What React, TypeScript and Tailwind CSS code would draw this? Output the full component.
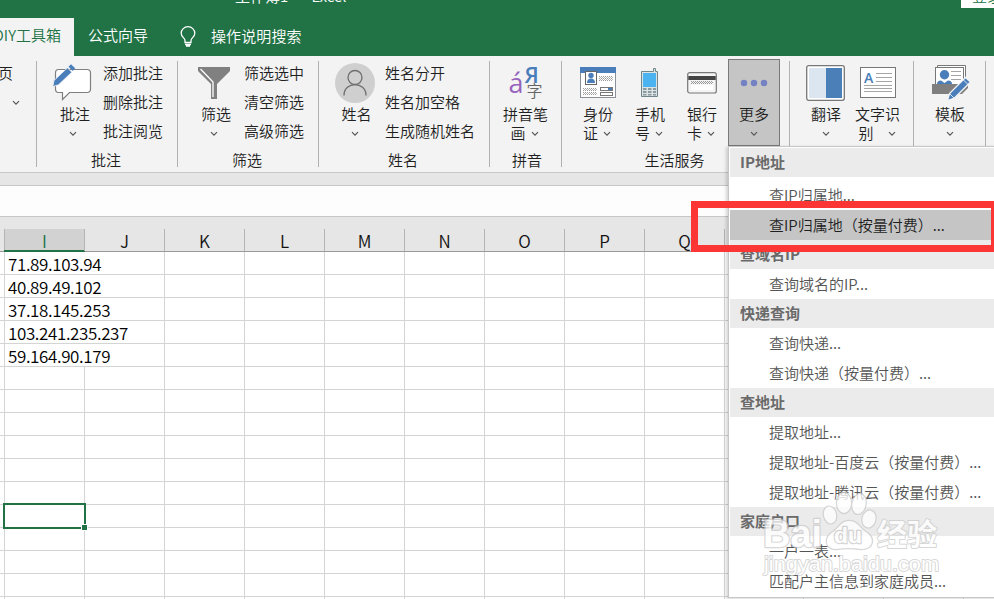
import type { ReactNode } from "react";

const COLUMNS = ["I", "J", "K", "L", "M", "N", "O", "P", "Q"];
const ROWS = 16;
const IPS = ["71.89.103.94", "40.89.49.102", "37.18.145.253", "103.241.235.237", "59.164.90.179"];

const MENU = [
    { title: "IP地址", items: ["查IP归属地...", "查IP归属地（按量付费）..."] },
    { title: "查域名IP", items: ["查询域名的IP..."] },
    { title: "快递查询", items: ["查询快递...", "查询快递（按量付费）..."] },
    { title: "查地址", items: ["提取地址...", "提取地址-百度云（按量付费）...", "提取地址-腾讯云（按量付费）..."] },
    { title: "家庭户口", items: ["一户一表...", "匹配户主信息到家庭成员..."] },
];

function Chevron({ className = "" }: { className?: string }) {
    return (
        <svg width="8" height="6" viewBox="0 0 8 6" className={`shrink-0 ${className}`}>
            <path d="M1 1.2 4 4.2 7 1.2" fill="none" stroke="#555" strokeWidth="1.2" />
        </svg>
    );
}

function CommentIcon() {
    return (
        <svg width="40" height="40" viewBox="0 0 40 40" className="-ml-[2px] -mt-px">
            <path d="M6.500 7.500H35Q38.500 7.500 38.500 11V27Q38.500 30.500 35 30.500H17.500L10.500 37.500V30.500H6.500Q3.500 30.500 3.500 27V11Q3.500 7.500 6.500 7.500Z" fill="#fff" stroke="#7f7f7f" strokeWidth="1.200" />
            <path d="M0.800 24.500 2 18.500 15.500 5.800 19.800 10.200 6.500 22.800Z" fill="#4a7ebb" stroke="#f3f3f3" strokeWidth="0.800" />
            <path d="M16.500 4.800 19 2.200 23.200 6.300 20.700 9Z" fill="#4a7ebb" />
        </svg>
    );
}

function FunnelIcon() {
    return (
        <svg width="34" height="36" viewBox="0 0 34 36">
            <path d="M1 2H33V6L20 19V34H14V19L1 6Z" fill="#808080" />
            <path d="M3.500 4 16 17V32" fill="none" stroke="#fff" strokeWidth="1.300" />
        </svg>
    );
}

function PersonIcon() {
    return (
        <svg width="40" height="40" viewBox="0 0 40 40">
            <circle cx="20" cy="20" r="20" fill="#cfcfcf" />
            <circle cx="20" cy="14.500" r="7" fill="none" stroke="#6e6e6e" strokeWidth="1.300" />
            <path d="M9 32.500C9 18 31 18 31 32.500" fill="none" stroke="#6e6e6e" strokeWidth="1.300" />
        </svg>
    );
}

function PinyinIcon() {
    return (
        <div className="relative h-10 w-10 leading-none">
            <span className="absolute top-[5px] left-[3px] font-['Open_Sans'] text-[27px] leading-[30px] font-normal text-[#9664bd]">á</span>
            <span className="absolute -top-px left-[19px] font-['Open_Sans'] text-[22px] leading-[24px] font-semibold text-[#4a7ebb]">Я</span>
            <span className="absolute top-[18px] left-[21px] text-[16px] leading-[18px] text-[#666]">字</span>
        </div>
    );
}

function IdCardIcon() {
    return (
        <svg width="36" height="31" viewBox="0 0 36 31">
            <rect x="0.500" y="0.500" width="35" height="30" fill="#fff" stroke="#8a9099" />
            <rect width="36" height="6" fill="#4a7ebb" />
            <rect x="5.500" y="4.500" width="11" height="13" fill="#fff" stroke="#666" />
            <circle cx="11" cy="8.500" r="2.700" fill="#4a7ebb" />
            <path d="M7 16Q7 11.500 11 11.500T15 16Z" fill="#4a7ebb" />
            <path d="M19 9.500H33M19 11.500H33M19 13.500H33M3 21.500H17M3 23.500H17M3 25.500H17M3 27.500H17" stroke="#9a9a9a" strokeDasharray="1 1" />
            <path d="M20 10.500H33M20 12.500H33M4 22.500H17M4 26.500H17" stroke="#b5b5b5" strokeDasharray="1 1" />
            <rect x="20.500" y="20.500" width="12" height="3" fill="#fff" stroke="#777" />
            <rect x="20.500" y="25.500" width="12" height="3" fill="#fff" stroke="#777" />
            <rect x="28" y="21" width="4" height="2" fill="#4a7ebb" />
        </svg>
    );
}

function PhoneIcon() {
    return (
        <svg width="18" height="29" viewBox="0 0 18 29">
            <path d="M0.500 3.500H12.500V0.500H14.500V3.500H16.500V28.500H0.500Z" fill="#dce3e5" stroke="#6f868b" />
            <rect x="2" y="5" width="13" height="14" fill="#4bb4f0" />
            <path d="M2 20H5.500V22H2ZM7 20H10.500V22H7ZM12 20H15V22H12ZM2 23H5.500V25H2ZM7 23H10.500V25H7ZM12 23H15V25H12ZM2 26H5.500V27.500H2ZM7 26H10.500V27.500H7ZM12 26H15V27.500H12Z" fill="#8a9a9e" />
        </svg>
    );
}

function BankCardIcon() {
    return (
        <svg width="30" height="22" viewBox="0 0 30 22">
            <rect x="0.700" y="0.700" width="28.600" height="20.300" rx="2" fill="#f4f4f4" stroke="#777" strokeWidth="1.200" />
            <rect x="1.300" y="4" width="27.400" height="4" fill="#444" />
            <path d="M4 9.500H26M4 11.500H26" stroke="#999" strokeDasharray="1 1" />
            <path d="M5 10.500H26" stroke="#999" strokeDasharray="1 1" />
            <rect x="4" y="13" width="22" height="5" fill="#fff" />
        </svg>
    );
}

function DotsIcon() {
    return (
        <svg width="28" height="8" viewBox="0 0 28 8" fill="#7482c4">
            <circle cx="4" cy="4" r="3.200" />
            <circle cx="14" cy="4" r="3.200" />
            <circle cx="24" cy="4" r="3.200" />
        </svg>
    );
}

function TranslateIcon() {
    return (
        <svg width="39" height="36" viewBox="0 0 39 36" className="-ml-[2px]">
            <rect x="0.700" y="0.700" width="37.600" height="34.600" rx="2" fill="#fff" stroke="#777" strokeWidth="1.300" />
            <rect x="3" y="3" width="17" height="30" fill="#dce6f1" />
            <rect x="20" y="3" width="16" height="30" fill="#4a7fb8" />
        </svg>
    );
}

function OcrIcon() {
    return (
        <svg width="36" height="31" viewBox="0 0 36 31">
            <rect x="0.500" y="0.500" width="35" height="30" fill="#fff" stroke="#777" />
            <path d="M16 6.500H32M16 10.500H32M16 14.500H32M4 18.500H32M4 21.500H32M4 24.500H32" stroke="#a6a6a6" />
            <text x="4" y="16" fontFamily="Open Sans, sans-serif" fontWeight="600" fontSize="14" fill="#4a7fb8">A</text>
        </svg>
    );
}

function TemplateIcon() {
    return (
        <svg width="38" height="36" viewBox="0 0 38 36" className="ml-px">
            <path d="M5.500 0.500H33.500V20H5.500Z" fill="#fff" stroke="#777" />
            <rect x="3.500" y="2.500" width="28" height="18" fill="#fff" stroke="#777" />
            <circle cx="12.500" cy="9.700" r="4.700" fill="#4a7ebb" />
            <path d="M5 19Q5 15.500 9 15.500L12.500 18 16 15.500Q20 15.500 20 19Z" fill="#4a7ebb" />
            <path d="M19 6.500H29M19 10.500H29M19 14.500H29" stroke="#a6a6a6" />
            <path d="M0 19H36V23L30 29H0Z" fill="#7f7f7f" />
            <path d="M15.500 35.500 17.500 28.500 33.500 12.500 38.500 17 22.500 33Z" fill="#4a7ebb" stroke="#f3f3f3" strokeWidth="1.300" />
            <path d="M31 14.500 36 19.500M17.500 28.500 22 33" stroke="#f3f3f3" strokeWidth="0.900" />
        </svg>
    );
}

type BigButtonProps = { icon: ReactNode; label: string; tail?: string; className?: string; labelClass?: string; gap?: string; active?: boolean };

function BigButton({ icon, label, tail, className = "w-[52px]", labelClass = "", gap = "gap-[5px]", active = false }: BigButtonProps) {
    return (
        <button className={`flex h-[87px] shrink-0 flex-col items-center ${active ? "bg-[#c5c5c5] outline outline-1 -outline-offset-1 outline-[#7a7a7a]" : ""} ${className}`}>
            <span className="flex h-[46px] items-center justify-center pt-px">{icon}</span>
            <span className={`h-[18px] leading-[18px] whitespace-nowrap ${labelClass}`}>{label}</span>
            <span className={`flex h-[19px] items-center leading-[19px] ${gap} ${tail ? "pr-[2px]" : ""}`}>
                {tail}
                <Chevron className="mt-[2px]" />
            </span>
        </button>
    );
}

function Group({ label, width, labelClass = "pr-[3px]", children }: { label?: string; width: string; labelClass?: string; children: ReactNode }) {
    return (
        <div className={`relative flex shrink-0 flex-col ${width}`}>
            <div className="flex h-[87px]">{children}</div>
            <div className={`mt-[5px] text-center leading-[18px] ${labelClass}`}>{label}</div>
            <div className="absolute top-[2px] right-0 h-[106px] w-px bg-[#b1b1b1]" />
        </div>
    );
}

function SmallButtons({ labels }: { labels: string[] }) {
    return (
        <div className="-mt-px ml-1 flex flex-col">
            {labels.map((label) => (
                <button key={label} className="h-[29px] text-left leading-[29px] whitespace-nowrap">{label}</button>
            ))}
        </div>
    );
}

function Ribbon() {
    return (
        <div className="flex h-[117px] shrink-0 border-b border-[#c8c8c8] bg-[#f3f3f3] pt-[3px] text-[15px] text-[#1f1f1f]">
            <Group width="w-[37px]">
                <div className="flex flex-col">
                    <span className="-mt-px -ml-[2px] h-[29px] leading-[29px]">页</span>
                    <Chevron className="mt-[13px] ml-[12px]" />
                </div>
            </Group>
            <Group label="批注" width="w-[141px]">
                <BigButton icon={<CommentIcon />} label="批注" className="ml-[10px] w-[52px]" labelClass="pl-1" />
                <SmallButtons labels={["添加批注", "删除批注", "批注阅览"]} />
            </Group>
            <Group label="筛选" width="w-[141px]">
                <BigButton icon={<FunnelIcon />} label="筛选" className="ml-[10px] w-[52px]" labelClass="pl-1" />
                <SmallButtons labels={["筛选选中", "清空筛选", "高级筛选"]} />
            </Group>
            <Group label="姓名" width="w-[171px]">
                <BigButton icon={<PersonIcon />} label="姓名" className="ml-[10px] w-[52px]" labelClass="pl-[3px]" />
                <SmallButtons labels={["姓名分开", "姓名加空格", "生成随机姓名"]} />
            </Group>
            <Group label="拼音" width="w-[72px]" labelClass="pl-[2px]">
                <BigButton icon={<PinyinIcon />} label="拼音笔" tail="画" className="w-[71px]" />
            </Group>
            <Group label="生活服务" width="w-[228px]">
                <BigButton icon={<IdCardIcon />} label="身份" tail="证" className="ml-[10px] w-[52px]" />
                <BigButton icon={<PhoneIcon />} label="手机" tail="号" />
                <BigButton icon={<BankCardIcon />} label="银行" tail="卡" />
                <BigButton icon={<DotsIcon />} label="更多" active />
            </Group>
            <Group width="w-[124px]">
                <BigButton icon={<TranslateIcon />} label="翻译" className="ml-[10px] w-[52px]" />
                <BigButton icon={<OcrIcon />} label="文字识" tail="别" gap="gap-[14px]" labelClass="pr-px" />
            </Group>
            <Group width="w-[72px]">
                <BigButton icon={<TemplateIcon />} label="模板" className="w-[72px]" />
            </Group>
        </div>
    );
}

function Header() {
    return (
        <div className="h-14 shrink-0 bg-[#217346] text-[15px] text-white">
            <div className="flex h-[18px] items-start justify-between overflow-hidden">
                <span className="-mt-[14px] ml-[235px] flex gap-[9px] leading-5 whitespace-nowrap">
                    <span>工作簿1</span>
                    <span>-</span>
                    <span>Excel</span>
                </span>
                <span className="h-2 w-[33px] overflow-hidden bg-white pl-[11px] whitespace-nowrap text-[#217346]">
                    <span className="-mt-[14px] block leading-5">登录</span>
                </span>
            </div>
            <div className="flex h-[38px] items-center">
                <div className="flex h-full w-[74px] items-center justify-end bg-[#f3f3f3] pr-[13px] pb-1 whitespace-nowrap text-[#217346]">DIY工具箱</div>
                <div className="ml-[14px] pb-1">公式向导</div>
                <svg width="16" height="22" viewBox="0 0 16 22" className="ml-8" fill="none" stroke="#fff" strokeWidth="1.300">
                    <path d="M5 16.500V14.500C5 12 1.200 11 1.200 7.200A6.800 6.500 0 0 1 14.800 7.200C14.800 11 11 12 11 14.500V16.500ZM5 18.500H11M6 20H10" />
                </svg>
                <div className="ml-[15px] pb-[2px] tracking-[0.1px]">操作说明搜索</div>
            </div>
        </div>
    );
}

function Sheet() {
    return (
        <div className="flex min-h-0 flex-1 flex-col">
            <div className="h-3 shrink-0 bg-[#e6e6e6]" />
            <div className="h-8 shrink-0 border-y border-[#c6c6c6] bg-[#fdfdfd]" />
            <div className="flex h-[35px] shrink-0 items-end border-b border-[#999] bg-[#e6e6e6] pl-1 text-[17px] text-[#111]">
                {COLUMNS.map((name, i) => (
                    <div
                        key={name}
                        className={`relative h-[22px] w-20 shrink-0 border-l border-[#b5b5b5] text-center leading-[24px] ${i === 0 ? "bg-[#d2d2d2] text-[#217346]" : ""}`}
                    >
                        {name}
                        {i === 0 && <div className="absolute -right-px -bottom-px -left-px h-[2px] bg-[#217346]" />}
                    </div>
                ))}
                <div className="h-[22px] border-l border-[#b5b5b5]" />
            </div>
            <div className="relative flex flex-1 flex-col overflow-hidden bg-white text-[17px] text-black">
                {Array.from({ length: ROWS }, (_, r) => (
                    <div key={r} className="flex h-[23px] shrink-0 border-b border-[#d4d4d4] pl-1">
                        {COLUMNS.map((name, c) => (
                            <div key={name} className={`w-20 shrink-0 border-l pl-[3px] leading-[23px] tracking-[-0.38px] whitespace-nowrap ${c === 1 && r < IPS.length ? "border-transparent" : "border-[#d4d4d4]"}`}>
                                {c === 0 ? IPS[r] : ""}
                            </div>
                        ))}
                        <div className="w-20 border-x border-[#d4d4d4]" />
                        <div className="w-20 border-r border-[#d4d4d4]" />
                        <div className="w-20 border-r border-[#d4d4d4]" />
                    </div>
                ))}
                {/* active cell with its fill handle */}
                <div className="absolute top-[251px] left-[3px] h-[26px] w-[83px] border-2 border-[#217346]">
                    <div className="absolute -right-[4px] -bottom-[4px] h-[7px] w-[7px] border border-white bg-[#217346]" />
                </div>
            </div>
        </div>
    );
}

function MoreMenu() {
    return (
        <div className="absolute top-[146px] left-[728px] h-[452px] w-[280px] border border-[#c6c6c6] bg-white pt-px pl-px text-[15px] text-[#555] shadow-[-2px_1px_3px_rgba(0,0,0,0.16)]">
            {MENU.map((section, s) => (
                <div key={section.title}>
                    <div className={`h-[29px] bg-[#ebebeb] pl-[10px] leading-[27px] font-bold text-[#6a6a6a] ${s === 0 ? "mb-[3px]" : ""}`}>{section.title}</div>
                    {section.items.map((item, i) => (
                        <div key={item} className={`h-[30px] pl-[39px] leading-[30px] whitespace-nowrap ${s === 0 && i === 1 ? "bg-[#c5c5c5] text-[#1f1f1f]" : ""}`}>
                            {item}
                        </div>
                    ))}
                </div>
            ))}
        </div>
    );
}

function Watermark() {
    return (
        <svg
            width="190"
            height="90"
            viewBox="0 0 190 90"
            className="absolute top-[490px] left-[755px] opacity-75"
            fill="#fff"
            stroke="#cacaca"
            strokeWidth="2.4"
            strokeLinejoin="round"
            paintOrder="stroke"
            fontFamily="Liberation Sans, Noto Sans CJK SC, sans-serif"
            fontWeight="700"
        >
            <text x="8" y="57" fontSize="38" textLength="59" lengthAdjust="spacingAndGlyphs">Bai</text>
            <ellipse cx="75" cy="25" rx="6" ry="8.500" transform="rotate(-12 75 25)" />
            <ellipse cx="89" cy="13" rx="7" ry="10" />
            <ellipse cx="104" cy="14" rx="6.500" ry="10" transform="rotate(10 104 14)" />
            <ellipse cx="114" cy="29" rx="6.500" ry="8.500" transform="rotate(12 114 29)" />
            <path d="M94 31C86 31 84 38 78 42C69 47 70 59 81 59Q94 57 106 59C119 59 120 48 111 42C104 38 103 31 94 31Z" />
            <text x="79" y="53" fontSize="22" textLength="28" lengthAdjust="spacingAndGlyphs">du</text>
            <text x="122" y="55" fontSize="30" strokeWidth="2">经验</text>
            <text x="9" y="81" fontSize="20" textLength="175" lengthAdjust="spacingAndGlyphs" fontWeight="400" strokeWidth="1.8">jingyan.baidu.com</text>
        </svg>
    );
}

export default function App() {
    return (
        <div className="relative flex h-[599px] w-[994px] flex-col overflow-hidden bg-white font-['Noto_Sans_CJK_SC',sans-serif] font-[350]">
            <Header />
            <Ribbon />
            <Sheet />
            <MoreMenu />
            <div className="absolute top-[201px] left-[691px] h-[51px] w-[307px] border-7 border-[#fc3535]" />
            <Watermark />
        </div>
    );
}
